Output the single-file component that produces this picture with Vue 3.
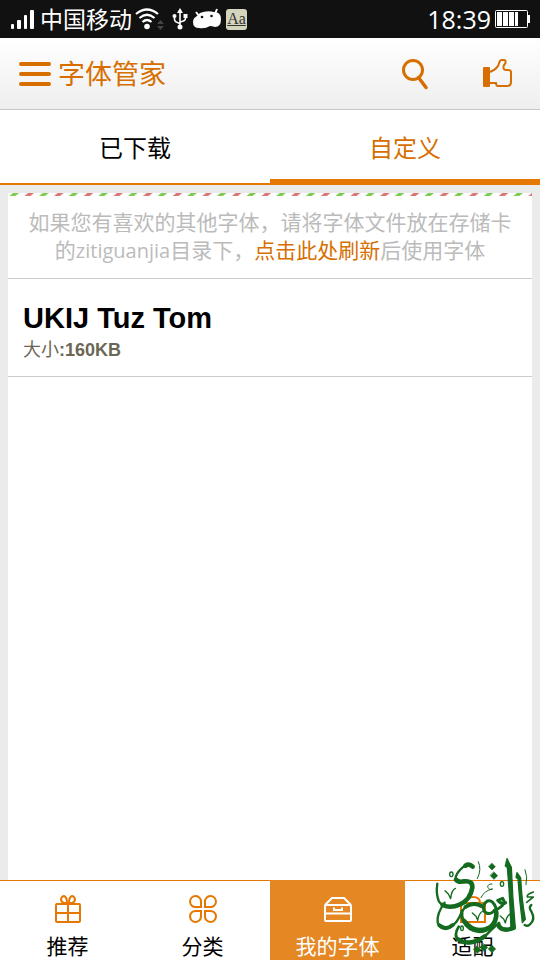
<script setup>
import { ref } from "vue";

const tabs = ["已下载", "自定义"];
const activeTab = ref("自定义");

const fonts = [{ name: "UKIJ Tuz Tom", size: "160KB" }];

const navItems = [
  { id: "gift", label: "推荐" },
  { id: "clover", label: "分类" },
  { id: "drawer", label: "我的字体" },
  { id: "bag", label: "适配" },
];
const activeNav = ref("drawer");
</script>

<template>
  <div class="app">
    <div class="status">
      <svg class="signal" width="24" height="20" viewBox="0 0 24 20" fill="#fff">
        <rect x="1" y="15" width="3" height="5" rx="1" />
        <rect x="7" y="11" width="4" height="9" rx="1" />
        <rect x="14" y="6" width="3" height="14" rx="1" />
        <rect x="20" y="1" width="4" height="19" rx="1" />
      </svg>
      <span class="carrier">中国移动</span>
      <svg width="30" height="24" viewBox="0 0 30 24" fill="none" stroke="#fff" stroke-width="2.2">
        <path d="M2 7Q13-2 24 7M5.500 11Q13 4.500 20.500 11M8.500 15Q13 11 17.500 15" />
        <circle cx="13" cy="19.500" r="2.800" fill="#fff" stroke="none" />
        <path d="M26.500 13l3.500 4h-7zM26.500 23l3.500-4h-7z" fill="#444" stroke="none" />
      </svg>
      <svg class="usb" width="16" height="22" viewBox="0 0 16 22" fill="none" stroke="#fff" stroke-width="1.600">
        <path d="M8 3v16M2.500 8v3.500Q2.500 14 8 15.500M13.500 8v2.500Q13.500 13 8 14" />
        <path d="M8 0l3 5H5z" fill="#fff" stroke="none" />
        <circle cx="8" cy="19" r="2.500" fill="#fff" stroke="none" />
        <circle cx="2.500" cy="8" r="2" fill="#fff" stroke="none" />
        <rect x="11.500" y="6" width="4" height="4" fill="#fff" stroke="none" />
      </svg>
      <svg class="robot" width="28" height="22" viewBox="0 0 28 22">
        <path d="M3 4L6 8M24 1L22 6" stroke="#fff" stroke-width="2" />
        <path d="M7 5Q14 2 21 4Q28 4 28 11Q28 19 22 19Q19 18 17 18Q12 21 6 20Q0 20 0 14Q0 10 4 8Z" fill="#fff" />
        <circle cx="9" cy="9" r="1.300" fill="#111" />
        <circle cx="18.500" cy="8" r="1.300" fill="#111" />
      </svg>
      <span class="aa">Aa</span>
      <span class="clock">18:39</span>
      <svg width="35" height="18" viewBox="0 0 35 18">
        <rect x="0.500" y="0.500" width="32" height="17" rx="1" fill="none" stroke="#fff" />
        <path d="M2 2h5v14H2zM8 2h5v14H8zM14 2h5v14h-5zM20 2h3v14h-3zM33 5h2v8h-2z" fill="#fff" />
      </svg>
    </div>

    <header class="bar">
      <button class="icon-btn" aria-label="菜单">
        <svg width="32" height="24" viewBox="0 0 32 24" stroke="#d66f00" stroke-width="4" stroke-linecap="round">
          <path d="M2 2h28M2 12h28M2 22h28" />
        </svg>
      </button>
      <h1>字体管家</h1>
      <button class="icon-btn search" aria-label="搜索">
        <svg width="28" height="32" viewBox="0 0 28 32" fill="none" stroke="#d66f00" stroke-width="3">
          <circle cx="12" cy="12" r="9.500" />
          <path d="M17.500 19.500L25 29.500" stroke-width="3.500" stroke-linecap="round" />
        </svg>
      </button>
      <button class="icon-btn" aria-label="赞">
        <svg width="30" height="29" viewBox="0 0 30 29" fill="none" stroke="#d66f00" stroke-width="2">
          <rect x="0" y="8" width="7" height="20" rx="1" fill="#d66f00" stroke="none" />
          <path d="M7 13Q15 10 16.500 3Q17 1 19 1H21Q23 1 22.500 4Q20 7 20.500 9Q21 11 23 11H25Q28 11 28 13V23Q28 27 24 27H15Q13 27 13 24H7" />
        </svg>
      </button>
    </header>

    <div class="tabs">
      <button
        v-for="tab in tabs"
        :key="tab"
        :class="['tab', { active: tab === activeTab }]"
        @click="activeTab = tab"
      >
        {{ tab }}
      </button>
    </div>

    <main>
      <div class="card">
        <svg class="stripes" height="3">
          <defs>
            <pattern id="airmail" width="29.640" height="3" patternUnits="userSpaceOnUse">
              <path d="M1.500 3L5 0H11L7.500 3Z" fill="#7ccb50" />
              <path d="M16.500 3L20 0H26L22.500 3Z" fill="#d97575" />
            </pattern>
          </defs>
          <rect width="100%" height="3" fill="url(#airmail)" />
        </svg>
        <p class="hint">
          如果您有喜欢的其他字体，请将字体文件放在存储卡的<span class="path">zitiguanjia</span>目录下，<a href="#">点击此处刷新</a>后使用字体
        </p>
        <ul>
          <li v-for="font in fonts" :key="font.name">
            <h2>{{ font.name }}</h2>
            <p class="size">大小<b>:{{ font.size }}</b></p>
          </li>
        </ul>
      </div>
    </main>

    <nav>
      <a
        v-for="item in navItems"
        :key="item.id"
        href="#"
        :class="{ active: item.id === activeNav }"
        @click.prevent="activeNav = item.id"
      >
        <svg width="30" height="30" viewBox="0 0 30 30" fill="none" stroke="currentColor" stroke-width="2">
          <template v-if="item.id === 'gift'">
            <rect x="3" y="10" width="24" height="18" rx="1" />
            <path d="M3 19h24M15 9v19" />
            <path d="M14 9H11Q8 8 8 5Q9 2 11 2Q14 3 14 9ZM16 9H19Q22 8 22 5Q21 2 19 2Q16 3 16 9Z" />
          </template>
          <template v-else-if="item.id === 'clover'">
            <path d="M13 13H8A5.500 5.500 0 1 1 13 8ZM17 13V8A5.500 5.500 0 1 1 22 13ZM13 17V22A5.500 5.500 0 1 1 8 17ZM17 17H22A5.500 5.500 0 1 1 17 22Z" />
          </template>
          <template v-else-if="item.id === 'drawer'">
            <rect x="2" y="11" width="26" height="16" rx="1" />
            <path d="M2 11L9 4H21L28 11M2 19.500H28M11 13.500V16H19V13.500" />
          </template>
          <template v-else>
            <path d="M3 9H27V28H3ZM8 9Q8 3 15 3Q22 3 22 9" />
          </template>
        </svg>
        <span>{{ item.label }}</span>
      </a>
    </nav>

    <svg class="emblem" width="115" height="110" viewBox="0 0 345 330" fill="none" stroke="#146b20" stroke-linecap="round" stroke-linejoin="round">
      <path d="M241 48L246 26L259 52Q262 140 271 234L258 238Q254 130 247 52Z" fill="#146b20" stroke-width="4" />
      <path d="M273 82L276 68L287 84Q290 150 301 208L292 218Q283 150 279 86Z" fill="#146b20" stroke-width="4" />
      <path d="M319 165Q310 172 319 184Q332 207 316 222Q308 231 299 225" stroke-width="7" />
      <path d="M325 126Q304 133 307 141L325 141L305 157" stroke-width="5" />
      <path d="M143 50Q131 37 113 52Q92 70 91 88Q98 99 118 94Q144 92 143 112Q138 149 105 165Q61 182 42 155Q32 132 37 101" stroke-width="7" />
      <path d="M143 50Q133 40 121 47M93 89Q99 98 118 94Q143 91 142 113Q136 150 104 164Q76 176 53 165" stroke-width="14" />
      <path d="M59 158Q35 190 38 217Q46 242 73 233Q98 219 108 190Q121 163 148 160Q172 160 176 178" stroke-width="7" />
      <path d="M43 226Q62 243 83 225M121 171Q144 154 171 169" stroke-width="12" />
      <path d="M111 183Q107 216 134 236Q168 256 199 231Q221 209 212 172Q203 148 187 153Q170 164 178 184Q194 199 208 181" stroke-width="9" />
      <path d="M117 213Q150 256 195 232Q216 215 214 187" stroke-width="14" />
      <path d="M208 182Q231 172 239 157L233 145L218 151Q231 166 242 158" stroke-width="9" />
      <path d="M101 230Q83 258 104 273Q140 290 179 260Q205 232 222 219Q225 245 266 234" stroke-width="8" />
      <path d="M99 268Q137 291 179 259M222 230Q235 246 266 234" stroke-width="13" />
      <path d="M60 122L70 132L77 146Q79 121 91 115M142 189L153 199L158 211Q161 190 174 183M226 198L236 207L241 219Q244 200 254 193" stroke-width="4" />
      <path d="M160 35Q171 58 157 86M300 59Q309 79 303 104M201 102Q188 101 188 112Q193 122 203 117Q178 121 168 143" stroke-width="3" />
      <ellipse cx="79" cy="73" rx="5" ry="7" stroke-width="4" />
      <ellipse cx="231" cy="102" rx="5" ry="7" stroke-width="4" />
      <ellipse cx="111" cy="235" rx="4" ry="7" stroke-width="4" />
      <path d="M201 40L211 50L201 60L191 50ZM207 66L218 77L207 88L196 77ZM157 288L168 299L157 310L146 299ZM177 282L188 292L177 304L166 292ZM201 286L212 297L201 308L190 297Z" fill="#146b20" stroke-width="2" />
    </svg>
  </div>
</template>

<style>
body {
  margin: 0;
}
</style>

<style scoped>
.app {
  position: relative;
  display: flex;
  flex-direction: column;
  min-height: 100vh;
  background: #fff;
  color: #000;
  font-family: "Open Sans", "Noto Sans CJK SC", sans-serif;
}

h1,
h2,
p,
ul {
  margin: 0;
  padding: 0;
}

button {
  border: 0;
  padding: 0;
  background: none;
  font: inherit;
  cursor: pointer;
}

svg {
  display: block;
  flex-shrink: 0;
}

.status {
  display: flex;
  align-items: center;
  height: 38px;
  padding: 0 10px;
  background: #111;
  color: #fff;
}

.carrier {
  margin: 0 2px 0 6px;
  font-size: 23px;
  line-height: 38px;
}

.usb {
  margin-left: 8px;
}

.robot {
  margin: 0 5px;
}

.aa {
  width: 21px;
  height: 21px;
  border-radius: 3px;
  background: #d5d4bc;
  color: #333;
  font-family: "Liberation Serif", serif;
  font-size: 16px;
  line-height: 20px;
  text-align: center;
  text-decoration: underline;
}

.clock {
  margin: 0 4px 0 auto;
  font-size: 25px;
  line-height: 38px;
}

.bar {
  display: flex;
  align-items: center;
  box-sizing: border-box;
  height: 72px;
  padding: 0 27px 0 19px;
  border-bottom: 1px solid #c8c8c8;
  background: linear-gradient(#fff, #eee);
  color: #d66f00;
}

h1 {
  margin-left: 7px;
  font-size: 27px;
  font-weight: 400;
  line-height: 36px;
}

.search {
  margin: 0 54px 0 auto;
}

.tabs {
  display: flex;
  height: 73px;
  border-bottom: 2px solid #e67700;
}

.tab {
  flex: 1;
  box-sizing: border-box;
  color: #000;
  font-size: 24px;
}

.tab.active {
  border-bottom: 4px solid #e67700;
  padding-top: 4px;
  color: #d66f00;
}

main {
  display: flex;
  flex: 1;
  padding: 8px 8px 0;
  background: #ebebeb;
}

.card {
  flex: 1;
  background: #fff;
}

.stripes {
  width: 100%;
}

.hint {
  padding: 12px 20px 13px;
  border-bottom: 1px solid #ccc;
  color: #bbb;
  font-size: 21px;
  line-height: 28px;
  text-align: center;
}

.hint a {
  color: #d66f00;
  text-decoration: none;
}

.path {
  font-size: 20px;
}

ul {
  list-style: none;
}

li {
  padding: 20px 15px 13px;
  border-bottom: 1px solid #ccc;
}

h2 {
  font-family: "Liberation Sans", sans-serif;
  font-size: 29px;
  line-height: 38px;
}

.size {
  color: #6b6754;
  font-family: "Liberation Sans", "Noto Sans CJK SC", sans-serif;
  font-size: 18px;
  line-height: 26px;
}

nav {
  display: flex;
  height: 80px;
}

nav a {
  display: flex;
  flex: 1;
  flex-direction: column;
  align-items: center;
  box-sizing: border-box;
  padding-top: 13px;
  border-top: 1px solid #e67700;
  color: #e67700;
  text-decoration: none;
}

nav span {
  margin-top: 7px;
  color: #000;
  font-size: 21px;
  line-height: 30px;
}

nav a.active {
  border-color: #e58824;
  background: #e58824;
  color: #fff;
}

nav .active span {
  color: #fff;
}

.emblem {
  position: absolute;
  right: 0;
  bottom: 0;
  pointer-events: none;
}
</style>
